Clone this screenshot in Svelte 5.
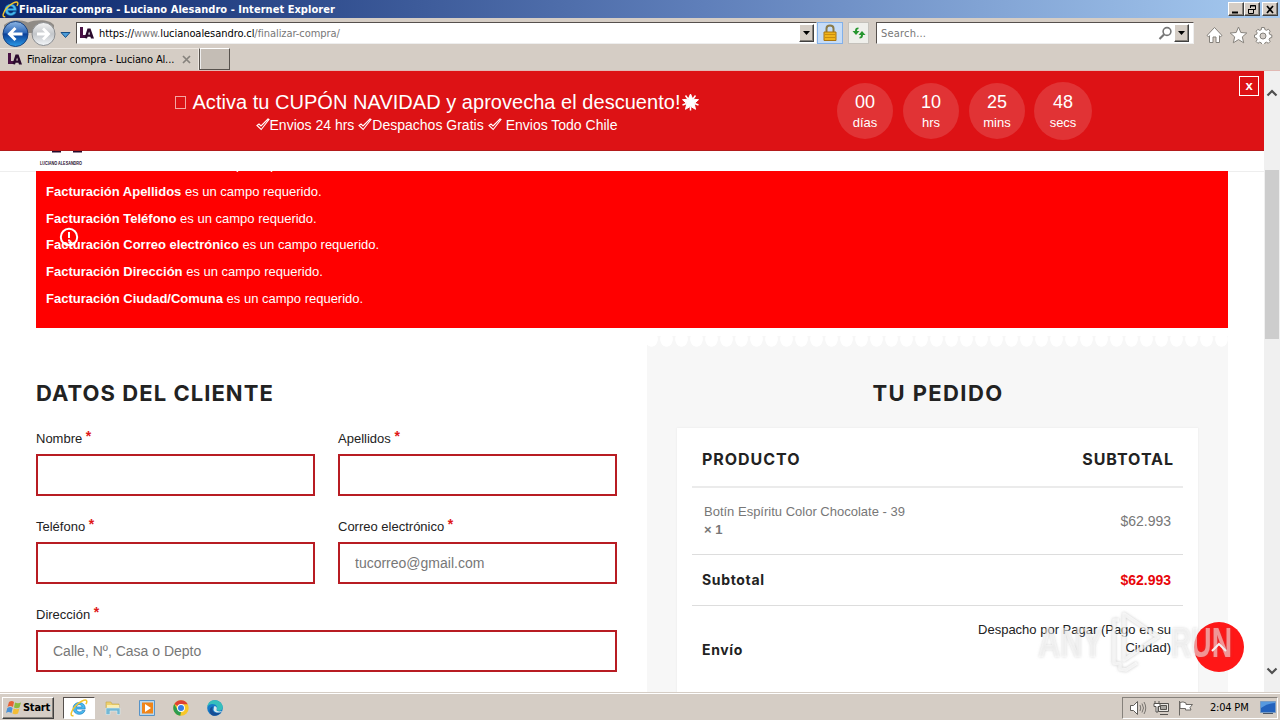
<script>
  const errors = ['Nombre', 'Apellidos', 'Teléfono', 'Correo electrónico', 'Dirección', 'Ciudad/Comuna']

  const countdown = [
    { value: '00', unit: 'días' },
    { value: '10', unit: 'hrs' },
    { value: '25', unit: 'mins' },
    { value: '48', unit: 'secs' },
  ]

  const fields = [
    { id: 'nombre', label: 'Nombre' },
    { id: 'apellidos', label: 'Apellidos' },
    { id: 'telefono', label: 'Teléfono' },
    { id: 'correo', label: 'Correo electrónico', placeholder: 'tucorreo@gmail.com' },
    { id: 'direccion', label: 'Dirección', placeholder: 'Calle, Nº, Casa o Depto', wide: true },
  ]
</script>

{#snippet explorer(size)}
  <svg class="ie" width={size} height={size} viewBox="0 0 18 18">
    <path d="M15.2 10.1H6.3c.2 3.3 4.6 3.6 5.8 1.3h3c-2.200 6-12 5.100-12-2.300C3.100 1.800 15.800 1.200 15.200 10.100ZM6.400 7.900h5.600c-.2-3-5.300-3-5.600 0Z" fill="#48b9ee" stroke="#1674b8" stroke-width=".6" />
    <path d="M3.500 16.500C-.5 18 1 11.500 5.500 7 9.500 2.700 15.500-.2 16.600 1.800c.5 1-.2 2.500-.8 3.400" fill="none" stroke="#f3c52c" stroke-width="1.500" />
  </svg>
{/snippet}

{#snippet favicon()}
  <svg class="favicon" width="15" height="15" viewBox="0 0 15 15">
    <path d="M1 1h3v8h4v3H1Z" fill="#4a1245" />
    <path fill-rule="evenodd" d="M5.500 12 8.500 2.500h3L15 12.500h-3l-.6-1.700H8.600L8 12.500Zm3.700-3.500h1.800l-.9-3Z" fill="#2b0b2d" />
  </svg>
{/snippet}

<div class="desktop">
  <div class="titlebar">
    {@render explorer(17)}
    <span class="title">Finalizar compra - Luciano Alesandro - Internet Explorer</span>
    <div class="window-buttons">
      <span class="bevel"><svg width="14" height="11"><path d="M3 8.500h6" stroke="#000" stroke-width="2" /></svg></span>
      <span class="bevel"><svg width="14" height="11"><path d="M5.500 4V1.500h5v4H9M5 2h6M3.500 5.500h5v4h-5ZM3 5.500h6" fill="none" stroke="#000" /></svg></span>
      <span class="bevel close"><svg width="14" height="11"><path d="m4 2 6 7m0-7L4 9" stroke="#000" stroke-width="1.700" /></svg></span>
    </div>
  </div>

  <div class="toolbar">
    <svg class="nav" width="74" height="29" viewBox="0 0 74 29">
      <defs>
        <linearGradient id="back" x1="0" y1="0" x2="0" y2="1">
          <stop offset="0" stop-color="#8eb6e4" />
          <stop offset=".45" stop-color="#2c66b8" />
          <stop offset=".5" stop-color="#0b3f98" />
          <stop offset="1" stop-color="#2a9be8" />
        </linearGradient>
        <linearGradient id="forward" x1="0" y1="0" x2="0" y2="1">
          <stop offset="0" stop-color="#f6f6f6" />
          <stop offset=".5" stop-color="#c3c6ca" />
          <stop offset="1" stop-color="#f4f7fa" />
        </linearGradient>
      </defs>
      <path d="M4 6C10 0 20 0 28 3.500 36 0 50 0 54 6v8H4Z" fill="#8f8b86" />
      <circle cx="15.500" cy="15" r="12.500" fill="url(#back)" stroke="#17407f" />
      <path d="M22.500 15H10m5.500-6-6 6 6 6" fill="none" stroke="#fff" stroke-width="3" />
      <circle cx="43.500" cy="15" r="11.500" fill="url(#forward)" stroke="#8b8d90" />
      <path d="M37 15h11m-5-5.500 5.500 5.500-5.500 5.500" fill="none" stroke="#fff" stroke-width="2.800" />
      <path d="M61 13.500h9l-4.500 5Z" fill="#4b9bd8" stroke="#164f87" />
    </svg>
    <div class="address">
      {@render favicon()}
      <span class="url">https://<i>www.</i><b>lucianoalesandro.cl</b><i>/finalizar-compra/</i></span>
      <span class="bevel drop"><svg width="9" height="6"><path d="M1 1h7L4.500 5Z" /></svg></span>
    </div>
    <span class="tool lock">
      <svg width="14" height="18" viewBox="0 0 14 18">
        <path d="M3.500 9V4.500c0-4 7-4 7 0V9" fill="none" stroke="#8a7a48" stroke-width="2" />
        <path d="M1 8h12v8.500H1Z" fill="#f0b41c" stroke="#a87411" />
        <path d="M2 10.500h10M2 13.500h10" stroke="#c98d10" />
      </svg>
    </span>
    <span class="tool">
      <svg width="16" height="16" viewBox="0 0 16 16" fill="#27962f">
        <path d="M7.500 2.500C5 2.500 4 3.500 4 6H1.500L5 10l3.500-4H6c0-1.200.3-1.800 1.500-2Z" />
        <path d="M8.500 13.500c2.500 0 3.500-1 3.500-3.500h2.500L11 6l-3.500 4H10c0 1.200-.3 1.800-1.500 2Z" />
      </svg>
    </span>
    <div class="search">
      <span>Search...</span>
      <svg width="15" height="15" viewBox="0 0 15 15" fill="none" stroke="#777">
        <circle cx="9" cy="5.500" r="3.900" stroke-width="1.600" />
        <path d="m6 8.500-4.500 4.500" stroke-width="2.200" />
      </svg>
      <span class="bevel drop"><svg width="9" height="6"><path d="M1 1h7L4.500 5Z" /></svg></span>
    </div>
    <svg class="commands" width="68" height="18" viewBox="0 0 68 18" fill="#fff" stroke="#85817b" stroke-linejoin="round">
      <path d="m1 9.500 7.500-8 7.500 8-1.500 1.200-1-1V16.500h-3.500V11h-3v5.500H3.500V9.700l-1 1Z" />
      <path d="m32.500 1 2.300 5.500 6 .5-4.500 3.900 1.400 5.900-5.200-3.200-5.200 3.200 1.400-5.900L24.200 7l6-.5Z" />
      <path d="m55.500 1.500 3 .1.400 2 1.700.7 1.800-1.100 1.800 2-1.100 1.700.7 1.600 2 .5v2.500l-2 .5-.7 1.700 1.100 1.700-1.900 1.900-1.700-1.100-1.700.7-.5 2h-2.600l-.5-2-1.600-.7-1.800 1.100-1.800-1.900 1.100-1.700-.7-1.700-2-.5V9l2-.5.7-1.600-1.100-1.700 1.800-1.900 1.800 1.100 1.600-.7Z" />
      <circle cx="57" cy="10" r="3" fill="#d4cec8" />
    </svg>
  </div>

  <div class="tabs">
    <div class="tab">
      {@render favicon()}
      <span>Finalizar compra - Luciano Al...</span>
      <svg width="9" height="9"><path d="m1 1 7 7m0-7L1 8" stroke="#86827d" stroke-width="1.700" /></svg>
    </div>
    <div class="new-tab"></div>
  </div>

  <div class="viewport">
    <main>
      <section class="banner">
        <div class="promo">
          <p class="promo-title">
            <span class="tofu"></span><span>Activa tu CUPÓN NAVIDAD y aprovecha el descuento!</span>
            <svg width="20" height="20" viewBox="0 0 20 20">
              <path d="m10.500 2 2.300 5.200 5.700.5-4.300 3.900 1.300 5.700-5-3-5 3 1.300-5.700-4.300-3.900 5.700-.5Z" fill="#fff" stroke="#fff" stroke-linejoin="round" />
              <path d="M5.500 3.500 8 7M15.500 3.500 13 7M18.500 13l-4-1.500M2.500 13l4-1.500M10.500 18.500v-4" stroke="#fff" stroke-width="1.500" />
            </svg>
          </p>
          <p class="promo-sub">
            {#each ['Envios 24 hrs', 'Despachos Gratis', 'Envios Todo Chile'] as perk, i}
              <svg width="14" height="13" viewBox="0 0 14 13"><path d="m1 7.500 2-1.500 2 2L12 1l1 .5L5.200 11.500Z" fill="none" stroke="#fff" stroke-width="1.100" /></svg>
              <span class:spaced={i === 2}>{perk}</span>
            {/each}
          </p>
        </div>
        <div class="countdown">
          {#each countdown as part}
            <div class="part">
              <strong>{part.value}</strong>
              <span>{part.unit}</span>
            </div>
          {/each}
        </div>
        <button class="dismiss">x</button>
      </section>

      <header>
        <svg width="44" height="20" viewBox="0 0 44 20" fill="#260b2d">
          <path d="M13 0h9v1.500h-9ZM34 0h9v1.500h-9ZM16 0h4v1h-4Z" />
          <text x="1" y="14" font-size="4.500" font-weight="700" textLength="42" lengthAdjust="spacingAndGlyphs">LUCIANO ALESANDRO</text>
        </svg>
      </header>

      <div class="notice">
        <ul>
          {#each errors as name}
            <li><b>Facturación {name}</b> es un campo requerido.</li>
          {/each}
        </ul>
        <svg class="alert" width="20" height="20" viewBox="0 0 20 20" fill="none" stroke="#fff" stroke-width="2">
          <circle cx="10" cy="10" r="8.200" />
          <path d="M10 5v6m0 1.500v2" />
        </svg>
      </div>

      <div class="checkout">
        <form class="customer">
          <h2>DATOS DEL CLIENTE</h2>
          <div class="fields">
            {#each fields as field}
              <div class="field" class:wide={field.wide}>
                <label for={field.id}>{field.label} <em>*</em></label>
                <input id={field.id} placeholder={field.placeholder} />
              </div>
            {/each}
          </div>
        </form>

        <section class="order">
          <h2>TU PEDIDO</h2>
          <div class="card">
            <div class="row head"><span>PRODUCTO</span><span>SUBTOTAL</span></div>
            <div class="row item">
              <span>Botín Espíritu Color Chocolate - 39<br /><b>× 1</b></span>
              <span class="price">$62.993</span>
            </div>
            <div class="row subtotal"><b>Subtotal</b><strong>$62.993</strong></div>
            <div class="row shipping">
              <b>Envío</b>
              <span>Despacho por Pagar (Pago en su Ciudad)</span>
            </div>
          </div>
        </section>
      </div>

      <button class="to-top" aria-label="Volver arriba">
        <svg width="18" height="12" viewBox="0 0 18 12"><path d="m2 10 7-7 7 7" fill="none" stroke="#fff" stroke-width="2" /></svg>
      </button>
    </main>

    <div class="scrollbar">
      <svg width="12" height="8" viewBox="0 0 12 8"><path d="m1.500 6.500 4.500-4.500 4.500 4.500" /></svg>
      <div class="thumb"></div>
      <svg width="12" height="8" viewBox="0 0 12 8"><path d="m1.500 1.500 4.500 4.500 4.500-4.500" /></svg>
    </div>

    <svg class="watermark" width="200" height="68" viewBox="0 0 200 68">
      <g fill="#fff" fill-opacity=".5">
        <text x="3" y="50" textLength="65" lengthAdjust="spacingAndGlyphs">ANY</text>
        <text x="136" y="50" textLength="61" lengthAdjust="spacingAndGlyphs">RUN</text>
      </g>
      <g fill="none" stroke="#fff" stroke-opacity=".7" stroke-width="3.500" stroke-linejoin="round">
        <path d="M89 7v46l34-23Z" />
        <path d="M84 13h-5v43l6 1v5l6 1 11-7" />
      </g>
    </svg>
  </div>

  <div class="taskbar">
    <div class="bevel start">
      <svg width="16" height="15" viewBox="0 0 16 15">
        <path d="M3 2q3-2 5 0L7 7Q4 5 1.500 7Z" fill="#e76135" />
        <path d="M9 2.500q3 1.500 6 0L13.500 7.500q-3 1.500-5.500 0Z" fill="#8cbb3d" />
        <path d="M1.300 8q3-2 5.300 0L5.500 13q-3-2-5.500 0Z" fill="#4b92d6" />
        <path d="M7.700 8.500q3 1.500 5.700 0L12 13.500q-3 1.500-5.500 0Z" fill="#f3bd35" />
      </svg>
      <b>Start</b>
    </div>
    <div class="pinned">
      <div class="active">{@render explorer(18)}</div>
      <svg width="18" height="18" viewBox="0 0 18 18">
        <path d="M2 3h5l1 2h7v4H2Z" fill="#edd06d" stroke="#c4a64c" stroke-width=".6" />
        <path d="M3 6h12v4H3Z" fill="#fbeeb0" />
        <path d="M2 9h14v6.500h-3V12H6v3.500H2Z" fill="#74b8d4" stroke="#d9edf4" stroke-width=".6" />
      </svg>
      <svg width="18" height="18" viewBox="0 0 18 18">
        <path d="M1.500 1.500h15v15h-15Z" fill="#b8d8ef" stroke="#5793c7" />
        <path d="M4 3.500h11v11H4Z" fill="#f08519" />
        <path d="m7 5 6 4-6 4Z" fill="#fff" />
      </svg>
      <svg width="18" height="18" viewBox="0 0 18 18">
        <circle cx="9" cy="9" r="7.700" fill="#f8c729" />
        <path d="M9 9 2.300 5.100A7.700 7.700 0 0 1 15.700 5.200L9 5.200Z" fill="#df4034" />
        <path d="M2.300 5.100 5.700 11 9 12.500 8.300 16.700A7.700 7.700 0 0 1 2.300 5.100" fill="#2c9c50" />
        <circle cx="9" cy="9" r="3.900" fill="#fff" />
        <circle cx="9" cy="9" r="3" fill="#387de5" />
      </svg>
      <svg width="18" height="18" viewBox="0 0 18 18">
        <circle cx="9" cy="9" r="7.800" fill="#167ac8" />
        <path d="M1.300 8C2 2 7 .5 11 1.500c5 1.500 7 6.500 5 9-1.500 1.700-5 1.500-5.500.5 2-3-.5-6-4-6-2.500 0-4 1-5.200 3" fill="#35bfbc" />
        <path d="M7 7.500c-2 5 2 8 8 5.500-2 3.500-6 4.500-9 3.200-3.500-2-3-8 1-8.700" fill="#174d94" />
        <path d="M8 7.500c2-.8 3.500 1 2.500 3.500-.3 1 3 2 5.500 1-1 2-7 2.500-8.500-1Z" fill="#d8e9ed" />
      </svg>
    </div>
    <div class="tray">
      <svg width="18" height="16" viewBox="0 0 18 16" fill="none" stroke="#5f5d59">
        <path d="M1.500 5.500h3l4-4v13l-4-4h-3Z" fill="#fff" />
        <path d="M11 5q1.500 3 0 6M13 3.500q3 4.500 0 9M15 2q3.500 6 0 12" stroke-width=".8" />
      </svg>
      <svg width="18" height="16" viewBox="0 0 18 16" fill="none" stroke="#55534f">
        <path d="M5.500 3.500h10v8h-10ZM7 14.500h8" fill="#e9e7e3" />
        <path d="M7.500 5.500h6v4h-6Z" fill="#a9a7a2" />
        <path d="M2 1v3M6 1v3M1 3.500h6v3H5v5.500H3V6.500H1Z" fill="#fff" />
      </svg>
      <svg width="18" height="16" viewBox="0 0 18 16" stroke="#6c6964">
        <path d="M2.500 1v14.500M3 2.500q3-1.500 6 .5v1.500h6.500L13 7.500l1 2.500H8.500V8.500H3Z" fill="#fff" />
      </svg>
      <span>2:04 PM</span>
      <svg width="16" height="14" viewBox="0 0 16 14">
        <path d="M.5.500h15v11H.5Z" fill="#2362bd" stroke="#789bc3" />
        <path d="M1 7Q8 2 15 2V1H1Z" fill="#5799df" />
        <path d="M3 12.500h10" stroke="#4a5564" />
      </svg>
    </div>
  </div>
</div>

<style>
  .desktop {
    width: 1280px;
    height: 720px;
    overflow: hidden;
    display: flex;
    flex-direction: column;
    background: #d5cdc5;
    font-family: 'DejaVu Sans Condensed', 'DejaVu Sans', sans-serif;
    font-size: 11px;
    color: #000;
  }

  .desktop * {
    box-sizing: border-box;
  }

  svg {
    flex: none;
    display: block;
  }

  .bevel {
    background: #d5cdc5;
    border: 1px solid;
    border-color: #fff #404040 #404040 #fff;
    box-shadow: inset -1px -1px #86817b;
    display: flex;
    align-items: center;
    justify-content: center;
  }

  .titlebar {
    height: 18px;
    padding: 0 2px;
    display: flex;
    align-items: center;
    background: linear-gradient(to right, #0c276c, #5f7fba 55%, #a6caf0);
    color: #fff;
    font-weight: 700;
  }

  .title {
    flex: 1;
    letter-spacing: 0.04px;
  }

  .window-buttons {
    display: flex;
  }

  .window-buttons .bevel {
    width: 16px;
    height: 14px;
  }

  .window-buttons .close {
    margin-left: 2px;
  }

  .toolbar {
    height: 30px;
    display: flex;
    align-items: center;
    flex: none;
  }

  .nav {
    margin-right: 2px;
  }

  .address {
    width: 741px;
    height: 22px;
    display: flex;
    align-items: center;
    padding: 1px 2px;
    background: #fff;
    border: 1px solid;
    border-color: #56504d #eee #eee #56504d;
  }

  .url {
    flex: 1;
    margin-left: 5px;
    letter-spacing: -0.06px;
  }

  .url i {
    font-style: normal;
    color: #777;
  }

  .url b {
    font-weight: 400;
  }

  .drop {
    width: 15px;
    height: 18px;
  }

  .tool {
    width: 21px;
    height: 22px;
    margin-left: 5px;
    display: flex;
    align-items: center;
    justify-content: center;
    background: #efefeb;
    border: 1px solid #c5c2bc;
  }

  .tool.lock {
    width: 26px;
    margin-left: 0;
    background: #c6dcf7;
    border-color: #82b0e9;
  }

  .search {
    width: 318px;
    height: 22px;
    margin-left: 7px;
    padding: 1px 4px;
    display: flex;
    align-items: center;
    gap: 1px;
    background: #fff;
    border: 1px solid;
    border-color: #56504d #eee #eee #56504d;
    color: #777;
  }

  .search span:first-child {
    flex: 1;
    letter-spacing: 0.2px;
  }

  .commands {
    margin: 4px 0 0 12px;
  }

  .tabs {
    height: 23px;
    flex: none;
    display: flex;
    border-bottom: 1px solid #e1b9b4;
  }

  .tab {
    width: 199px;
    padding: 0 7px;
    border: 1px solid #eee8e2;
    border-width: 1px 1px 0 0;
    display: flex;
    align-items: center;
  }

  .tab span {
    flex: 1;
    margin-left: 5px;
    letter-spacing: -0.14px;
    white-space: nowrap;
  }

  .new-tab {
    width: 31px;
    height: 22px;
    background: #c4bdb5;
    border: 1px solid #57524d;
    border-top-color: #fff;
    box-shadow: inset 1px 0 #eee;
  }

  .viewport {
    flex: 1;
    min-height: 0;
    display: flex;
    position: relative;
    background: #fff;
    font-family: 'Liberation Sans', Arial, sans-serif;
  }

  main {
    width: 1264px;
    overflow: hidden;
    position: relative;
  }

  .banner {
    height: 80px;
    display: flex;
    position: relative;
    background: #dd1215;
    border-bottom: 1px solid #b31b1b;
    color: #fff;
  }

  .promo {
    width: 837px;
    padding: 20px 0 0 38px;
    display: flex;
    flex-direction: column;
    align-items: center;
  }

  .promo p {
    margin: 0;
    display: flex;
    align-items: center;
    white-space: nowrap;
  }

  .promo-title {
    height: 22px;
    font-size: 20px;
    letter-spacing: 0.03px;
  }

  .tofu {
    width: 11px;
    height: 13px;
    margin-right: 7px;
    border: 1px solid #f3a5a2;
  }

  .promo-sub {
    height: 23px;
    padding-right: 2px;
    font-size: 14px;
  }

  .promo-sub span {
    margin-right: 4px;
  }

  .promo-sub .spaced {
    margin: 0 0 0 4px;
  }

  .countdown {
    display: flex;
    gap: 10px;
    padding-top: 12px;
  }

  .part {
    width: 56px;
    height: 56px;
    padding-top: 8px;
    border-radius: 50%;
    background: #e13335;
    display: flex;
    flex-direction: column;
    align-items: center;
    font-size: 13px;
    line-height: 20px;
  }

  .part:last-child {
    width: 58px;
    height: 58px;
    margin: -1px 0 0 -1px;
    padding-top: 9px;
  }

  .part strong {
    font-size: 18px;
    font-weight: 400;
    line-height: 22px;
  }

  .dismiss {
    position: absolute;
    top: 5px;
    right: 5px;
    width: 20px;
    height: 20px;
    padding: 0 0 2px;
    border: 1px solid #fff;
    background: none;
    color: #fff;
    font: 700 13px/17px 'Liberation Sans', sans-serif;
  }

  header {
    height: 21px;
    padding-left: 39px;
    background: #fff;
    border-bottom: 1px solid #eee;
  }

  .notice {
    width: 1192px;
    height: 157px;
    margin: -1px 36px 0;
    position: relative;
    overflow: hidden;
    background: #f00;
    color: #fff;
    font-size: 13px;
  }

  .notice ul {
    list-style: none;
    margin: -19px 0 0;
    padding: 0 10px;
  }

  .notice li {
    line-height: 26.8px;
  }

  .alert {
    position: absolute;
    left: 23px;
    top: 56px;
  }

  .checkout {
    padding: 8px 36px 0;
    display: flex;
    gap: 30px;
  }

  h2 {
    margin: 0;
    font: 700 22px/28px Inter, sans-serif;
    color: #222;
  }

  .customer {
    width: 581px;
    padding-top: 43px;
  }

  .customer h2 {
    letter-spacing: 1.05px;
  }

  .fields {
    margin-top: 21px;
    display: grid;
    grid-template-columns: 1fr 1fr;
    gap: 20px 23px;
  }

  .field {
    height: 68px;
    display: flex;
    flex-direction: column;
    justify-content: space-between;
  }

  .field.wide {
    grid-column: span 2;
  }

  label {
    padding-top: 1px;
    font-size: 13px;
    line-height: 20px;
    color: #222;
  }

  label em {
    font-style: normal;
    font-weight: 700;
    font-size: 14px;
    line-height: 10px;
    vertical-align: 2px;
    color: #e01818;
  }

  input {
    width: 100%;
    height: 42px;
    padding: 0 15px;
    border: 2px solid #b81c23;
    background: #fff;
    font: 14px 'Liberation Sans', sans-serif;
  }

  input::placeholder {
    color: #777;
  }

  .order {
    width: 581px;
    height: 400px;
    padding: 43px 30px 0;
    text-align: center;
    /* scalloped paper edge along the top */
    background:
      radial-gradient(ellipse 6.5px 8px at 50% 3px, #fff 92%, transparent) -3px 0 / 15px 12px repeat-x,
      #f7f7f7;
  }

  .order h2 {
    letter-spacing: 1.4px;
    text-indent: 1px;
  }

  .card {
    height: 330px;
    margin-top: 21px;
    padding: 0 15px;
    background: #fff;
    box-shadow: 0 0 2px #e8e8e8;
    text-align: left;
    color: #222;
  }

  .row {
    padding: 0 12px 0 10px;
    display: flex;
    align-items: center;
    justify-content: space-between;
    border-bottom: 1px solid #ddd;
  }

  .row b {
    font: 700 14px/18px Inter, sans-serif;
    letter-spacing: 0.65px;
  }

  .head {
    height: 60px;
    padding: 3px 9px 0 10px;
    border-bottom: 2px solid #ebebeb;
    font: 700 16px/20px Inter, sans-serif;
    letter-spacing: 0.95px;
  }

  .item {
    height: 67px;
    padding: 0 12px;
    color: #777;
    font-size: 13px;
    line-height: 18px;
  }

  .item b {
    font: 700 13px/18px 'Liberation Sans', sans-serif;
    letter-spacing: 0;
  }

  .price {
    font-size: 14px;
  }

  .subtotal {
    height: 51px;
  }

  .subtotal strong {
    font-size: 14px;
    color: #e8060b;
  }

  .shipping {
    height: 87px;
    border: 0;
  }

  .shipping span {
    width: 200px;
    padding-bottom: 21px;
    text-align: right;
    font-size: 13px;
    line-height: 18px;
  }

  .to-top {
    position: absolute;
    left: 1194px;
    top: 551px;
    width: 50px;
    height: 50px;
    border: 0;
    border-radius: 50%;
    background: #ff1717;
    display: flex;
    align-items: center;
    justify-content: center;
  }

  .scrollbar {
    width: 16px;
    padding: 18px 0 17px;
    display: flex;
    flex-direction: column;
    align-items: center;
    justify-content: space-between;
    background: #f0f0f0;
  }

  .scrollbar path {
    fill: none;
    stroke: #505050;
    stroke-width: 2.2;
  }

  .thumb {
    width: 14px;
    height: 169px;
    margin: 73px 0 auto;
    background: #cdcdcd;
  }

  .watermark {
    position: absolute;
    left: 1035px;
    top: 536px;
    pointer-events: none;
    font: 700 43px 'Liberation Sans Narrow', 'Liberation Sans', sans-serif;
    filter: drop-shadow(0 0 1.5px rgb(120 120 120 / 0.55));
  }

  .taskbar {
    height: 28px;
    flex: none;
    display: flex;
    align-items: center;
    border-top: 1px solid #d5cdc5;
    box-shadow: inset 0 1px #fff;
    padding: 3px 2px 1px;
  }

  .start {
    width: 52px;
    height: 22px;
    gap: 1px;
    letter-spacing: -0.2px;
  }

  .pinned {
    flex: 1;
    margin-left: 9px;
    display: flex;
    align-items: center;
    gap: 16px;
  }

  .active {
    width: 32px;
    height: 22px;
    margin-right: -7px;
    display: flex;
    align-items: center;
    justify-content: center;
    background: #fff;
    border: 1px solid;
    border-color: #56504d #fff #fff #56504d;
  }

  .tray {
    width: 156px;
    height: 22px;
    padding: 0 1px 0 6px;
    display: flex;
    align-items: center;
    gap: 6px;
    border: 1px solid;
    border-color: #86817b #fff #fff #86817b;
  }

  .tray span {
    flex: 1;
    margin-left: 9px;
    letter-spacing: -0.2px;
    white-space: nowrap;
  }
</style>
